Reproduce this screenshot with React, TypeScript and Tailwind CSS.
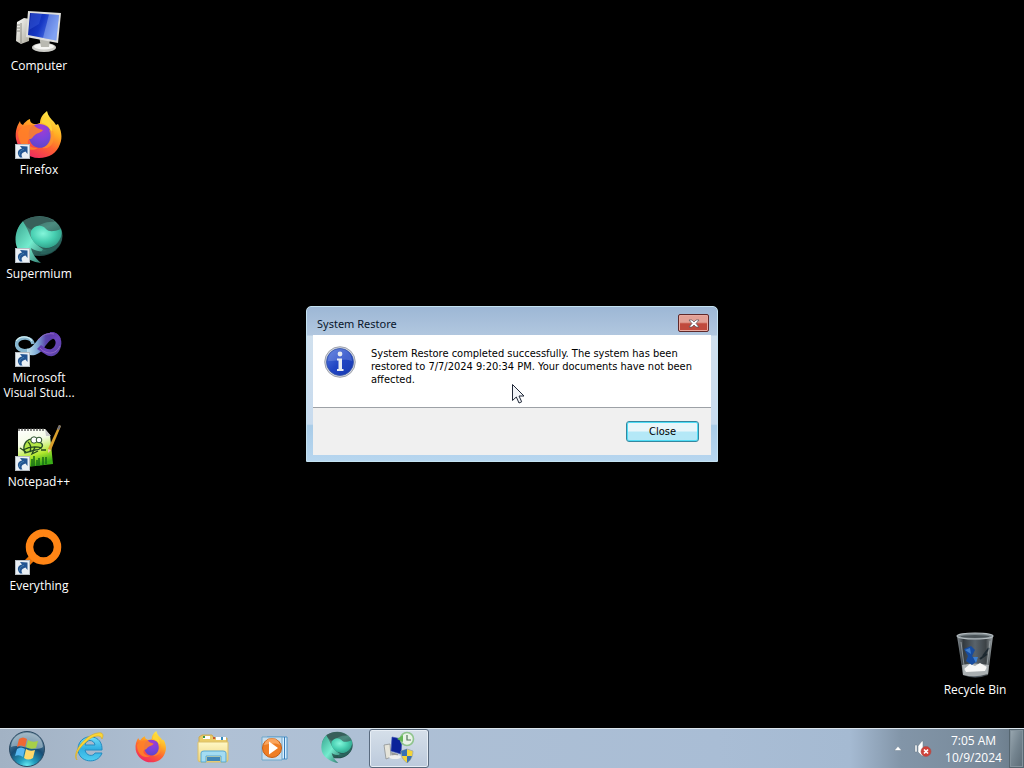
import type { ReactNode } from "react";

function ComputerIcon() {
  return (
    <svg viewBox="0 0 48 48" className="size-12" aria-hidden="true">
      <defs>
        <linearGradient id="pcScreen" x1="0" y1="0" x2="1" y2="0.4">
          <stop offset="0" stopColor="#0a1f9c" />
          <stop offset="0.5" stopColor="#1537c4" />
          <stop offset="1" stopColor="#5f86ee" />
        </linearGradient>
        <linearGradient id="pcCase" x1="0" y1="0" x2="1" y2="1">
          <stop offset="0" stopColor="#ffffff" />
          <stop offset="1" stopColor="#a9a798" />
        </linearGradient>
      </defs>
      <path d="M2 15 L9 11 L15 12 L14 34 L6 37 L1 34Z" fill="url(#pcCase)" />
      <path d="M6 16 L6 36 M2 18 L5 18 M2 21 L5 21 M2 24 L5 24" stroke="#77766c" strokeWidth="0.8" />
      <ellipse cx="29" cy="40.5" rx="12" ry="4.5" fill="#cdcdc8" />
      <ellipse cx="29" cy="39.5" rx="10" ry="3" fill="#f5f5f2" />
      <path d="M24 29 L35 32 L34 40 L26 40Z" fill="#b9b9b1" />
      <path d="M13 4 L46 6 L43 36 L11 30Z" fill="#dededb" />
      <path d="M15 6 L44 8 L41.3 33.5 L13 28Z" fill="url(#pcScreen)" />
      <path d="M34 7.3 L44 8 L41.3 33.5 L28 31Z" fill="#b5cdfa" opacity="0.4" />
      <path d="M16 6.2 L27 7 L24 17 L14 23Z" fill="#3358d8" opacity="0.5" />
    </svg>
  );
}

function FirefoxIcon({ id, className }: { id: string; className: string }) {
  return (
    <svg viewBox="0 0 48 48" className={className} aria-hidden="true">
      <defs>
        <linearGradient id={`${id}Flame`} x1="0.75" y1="0" x2="0.25" y2="1">
          <stop offset="0" stopColor="#fff04a" />
          <stop offset="0.35" stopColor="#ffad24" />
          <stop offset="0.62" stopColor="#ff6331" />
          <stop offset="1" stopColor="#ee2266" />
        </linearGradient>
        <radialGradient id={`${id}Globe`} cx="0.55" cy="0.2" r="0.9">
          <stop offset="0" stopColor="#a53ad3" />
          <stop offset="0.5" stopColor="#7844dc" />
          <stop offset="1" stopColor="#5b45c4" />
        </radialGradient>
      </defs>
      <path
        d="M5 10 C5 12 6 13 8 14 C9 12 12 9 15 8 C15 11 16 12 19 13 C21 13 23 13 25 12 C25 7 28 3 32 0 C33 5 36 8 39 11 L41 14 L43 13 C46 19 48 26 45 33 C42 42 34 47 24 47 C13 47 3 39 1 28 C0 20 2 15 5 10Z"
        fill={`url(#${id}Flame)`}
      />
      <path d="M16 16 C20 12 28 12 33 16 C38 21 37 31 31 35 C25 39 17 36 15 30 C13 25 13 20 16 16Z" fill={`url(#${id}Globe)`} />
      <path d="M3 21 C7 15 13 13 19 14 C21 17 24 18 28 19 C26 22 22 22 20 24 C17 26 18 28 14 28 C10 32 16 38 23 37 C15 42 3 37 3 21Z" fill="#ff8128" opacity="0.9" />
      <path d="M27 12 C32 13 35 17 37 22 C38 15 34 9 31 4 C28 7 26 9 27 12Z" fill="#ffd739" opacity="0.9" />
      <path d="M34 19 C37 26 35 34 27 37 C36 39 41 30 38 20Z" fill="#ff9830" opacity="0.6" />
    </svg>
  );
}

function SupermiumIcon({ id, className }: { id: string; className: string }) {
  return (
    <svg viewBox="0 0 48 48" className={className} aria-hidden="true">
      <defs>
        <linearGradient id={`${id}Left`} x1="0" y1="0" x2="1" y2="1">
          <stop offset="0" stopColor="#38a38e" />
          <stop offset="0.5" stopColor="#74ecce" />
          <stop offset="1" stopColor="#23645c" />
        </linearGradient>
        <linearGradient id={`${id}Lens`} x1="0" y1="0" x2="0.6" y2="1">
          <stop offset="0" stopColor="#345f59" />
          <stop offset="0.5" stopColor="#4c8c80" />
          <stop offset="1" stopColor="#1f4a46" />
        </linearGradient>
        <radialGradient id={`${id}Core`} cx="0.4" cy="0.35" r="0.75">
          <stop offset="0" stopColor="#84f5da" />
          <stop offset="0.5" stopColor="#47cfb1" />
          <stop offset="1" stopColor="#2b9580" />
        </radialGradient>
      </defs>
      <ellipse cx="24.5" cy="21" rx="23" ry="20" fill={`url(#${id}Lens)`} />
      <path d="M8 6 C0 14 -2 28 4 36 C8 42 17 47 26 48 C20 43 17 38 16 33 C20 36 26 37 32 36 C23 32 17 26 14 18 C12 13 10 10 8 6Z" fill={`url(#${id}Left)`} />
      <path d="M8 6 C18 0 32 0 40 7 C32 6 24 9 18 15 C13 14 10 10 8 6Z" fill="#385f5a" />
      <path d="M16 16 C19 10 27 9 31 14 C34 17 38 17 46 14 C49 25 41 33 31 33 C21 32 14 24 16 16Z" fill={`url(#${id}Core)`} />
      <path d="M25 39 C37 41 48 31 47 19 C44 29 37 35 28 34Z" fill="#2b665f" opacity="0.8" />
    </svg>
  );
}

function VisualStudioIcon() {
  return (
    <svg viewBox="0 -4 48 48" className="size-12" aria-hidden="true">
      <defs>
        <linearGradient id="vsBand" x1="0" y1="0" x2="1" y2="0">
          <stop offset="0" stopColor="#c0e2ef" />
          <stop offset="0.3" stopColor="#7eabd4" />
          <stop offset="0.55" stopColor="#5a46ad" />
          <stop offset="1" stopColor="#4d2995" />
        </linearGradient>
        <linearGradient id="vsLoop" x1="0" y1="0" x2="1" y2="1">
          <stop offset="0" stopColor="#4b2591" />
          <stop offset="0.55" stopColor="#6b45bd" />
          <stop offset="1" stopColor="#54439f" />
        </linearGradient>
      </defs>
      <path d="M18 21 C17 14 6 13 2 19 C0 26 7 29 14 27" fill="none" stroke="#86b6cf" strokeWidth="3.5" />
      <path d="M1 18 C5 12 14 13 17 18" fill="none" stroke="#d2f0f4" strokeWidth="1.3" />
      <path d="M12 26 C20 25 23 11 34 10 C39 8 44 11 46 16 C38 13 34 18 29 25 C24 32 17 34 12 31Z" fill="url(#vsBand)" />
      <path d="M35 9 C43 8 48 16 46 23 C44 32 37 36 30 31 L22 26 L26 22 C30 25 35 29 39 24 C42 20 41 15 35 15Z" fill="url(#vsLoop)" />
      <path d="M23 17 C28 11 33 10 39 11 M25 25 C31 32 41 32 45 23" fill="none" stroke="#9a71ca" strokeWidth="0.8" />
    </svg>
  );
}

function NotepadIcon() {
  return (
    <svg viewBox="0 0 48 48" className="size-12" aria-hidden="true">
      <defs>
        <linearGradient id="npPage" x1="0" y1="0" x2="0.3" y2="1">
          <stop offset="0" stopColor="#ffffff" />
          <stop offset="0.4" stopColor="#f5fce7" />
          <stop offset="0.75" stopColor="#b4e92f" />
          <stop offset="1" stopColor="#3bae17" />
        </linearGradient>
      </defs>
      <path d="M3 6 L30 6 L35 12 L38 41 L3 45Z" fill="url(#npPage)" />
      <path d="M4 5V8 M7 5V8 M10 5V8 M13 5V8 M16 5V8 M19 5V8 M22 5V8 M25 5V8 M28 5V8" stroke="#3b3b3b" strokeWidth="1.2" />
      <path d="M30 6 L31 13 L36 13Z" fill="#c9c9c9" />
      <path d="M9 27 C8 20 13 15 19 16 L26 20 C30 23 25 27 20 27 L10 30Z" fill="#b4e747" stroke="#29502a" strokeWidth="1.4" />
      <circle cx="19" cy="17" r="3.2" fill="#fff" stroke="#29502a" />
      <circle cx="24" cy="17" r="2.8" fill="#fff" stroke="#29502a" />
      <path d="M8 27 Q17 22 27 25 M13 19 Q17 22 15 29 M5 25 L11 29 M20 24 L17 31 L23 28 M26 27H31" fill="none" stroke="#24491c" strokeWidth="1.3" />
      <path d="M17 36V43 M19 33V43 M22 37V43 M24 35V43 M28 34V42 M31 34V41" stroke="#176c16" strokeWidth="1.5" />
      <path d="M44 2 L46 3 L36 27 L33 30 L33 26Z" fill="#d99f2c" />
      <path d="M44 2 L46 3 L44 7 L42 6Z" fill="#70717c" />
      <path d="M33 26 L36 27 L33 30Z" fill="#e8d0a0" />
    </svg>
  );
}

function EverythingIcon() {
  return (
    <svg viewBox="0 0 48 48" className="size-12" aria-hidden="true">
      <path d="M17 31 L6 42" stroke="#e8740a" strokeWidth="7" />
      <circle cx="28.5" cy="20" r="14" fill="none" stroke="#ff8515" strokeWidth="7.5" />
    </svg>
  );
}

function RecycleBinIcon() {
  return (
    <svg viewBox="0 0 48 48" className="size-12" aria-hidden="true">
      <defs>
        <linearGradient id="binGlass" x1="0" y1="0" x2="1" y2="0">
          <stop offset="0" stopColor="#858d92" />
          <stop offset="0.18" stopColor="#343b40" />
          <stop offset="0.5" stopColor="#59636b" />
          <stop offset="0.8" stopColor="#3c4246" />
          <stop offset="1" stopColor="#a0a7aa" />
        </linearGradient>
      </defs>
      <path d="M6 5 L42 5 L37 44 Q24 49 12 44Z" fill="url(#binGlass)" />
      <path d="M11 34 Q22 31 38 34 L37 43 Q24 47 12 44Z" fill="#a9aeb0" />
      <path d="M13 38 L19 33 L24 35 L29 32 L36 36 L34 40 L15 41Z" fill="#f7f7f6" />
      <path d="M13 18 L20 15 L24 19 L21 25 L26 30 L21 34 L15 30 L17 25Z" fill="#174ca0" />
      <path d="M14 19 L19 17 L20 23Z M22 26 L27 26 L25 32Z" fill="#3c7fd0" />
      <path d="M32 25 L38 17 M29 28 L36 23" stroke="#1c2830" strokeWidth="2" />
      <ellipse cx="24" cy="5" rx="18" ry="3" fill="#7f898e" stroke="#b4bcc0" strokeWidth="1.2" />
      <ellipse cx="24" cy="5.5" rx="14.5" ry="1.5" fill="#4a5358" />
      <path d="M10 11 L14 42 M39 10 L35 42" stroke="#bbc4c7" strokeWidth="1" opacity="0.6" />
    </svg>
  );
}

function ShortcutArrow() {
  return (
    <svg viewBox="0 0 15 15" className="absolute bottom-0 left-0 size-[15px]" aria-hidden="true">
      <rect x="0.5" y="0.5" width="14" height="14" fill="#eaf0f5" stroke="#b4bbc1" />
      <path d="M5 13.5 C1.5 9.5 2.5 5.5 7 4.5 L5 2 L12.5 2.5 L12.5 10 L10.5 7.5 C7 8.5 5.5 10.5 7.5 13.5Z" fill="#225491" />
      <path d="M4.5 11 C4 8 6 6 9 5.5" fill="none" stroke="#437eaf" strokeWidth="1" />
    </svg>
  );
}

function DesktopIcon({ label, shortcut = false, children }: { label: string; shortcut?: boolean; children: ReactNode }) {
  return (
    <li className="h-[104px]">
      <button className="flex w-full flex-col items-center gap-[3px] text-xs/[15px] text-white [text-shadow:0_1px_2px_#000]">
        <span className="relative block">
          {children}
          {shortcut && <ShortcutArrow />}
        </span>
        <span className="w-[72px] whitespace-pre-line text-center">{label}</span>
      </button>
    </li>
  );
}

function StartOrb() {
  return (
    <svg viewBox="0 0 38 38" className="size-[38px]" aria-hidden="true">
      <defs>
        <radialGradient id="orb" cx="0.5" cy="1" r="0.95">
          <stop offset="0" stopColor="#6ff2f7" />
          <stop offset="0.25" stopColor="#249fc0" />
          <stop offset="0.6" stopColor="#174d75" />
          <stop offset="1" stopColor="#6f8ea3" />
        </radialGradient>
      </defs>
      <circle cx="19" cy="19" r="17.5" fill="url(#orb)" stroke="#2b4a63" />
      <path d="M3 17 C4 -2 34 -2 35 17 C26 23 12 13 3 17Z" fill="#dfeaf0" opacity="0.45" />
      <path d="M11 9 Q15 6 19 9 L17 17 Q13 14 9 17Z" fill="#ef6834" />
      <path d="M20 10 Q24 13 30 11 L28 18 Q22 20 18 17Z" fill="#a7cf49" />
      <path d="M9 19 Q13 16 17 19 L15 27 Q11 24 7 26Z" fill="#58b8f1" />
      <path d="M18 19 Q22 22 27 20 L25 28 Q20 31 16 28Z" fill="#ffd96a" />
    </svg>
  );
}

function ExplorerBrowserIcon() {
  return (
    <svg viewBox="0 0 32 32" className="size-8" aria-hidden="true">
      <defs>
        <linearGradient id="ie" x1="0" y1="0" x2="0" y2="1">
          <stop offset="0" stopColor="#73dff8" />
          <stop offset="0.5" stopColor="#31afe2" />
          <stop offset="1" stopColor="#51cef1" />
        </linearGradient>
      </defs>
      <path d="M29 19 H12 C13 25 20 26 22 22 H29 C25 34 5 32 5 18 C5 2 30 1 29 19Z M12 14 H22 C21 8 13 8 12 14Z" fill="url(#ie)" stroke="#248bc1" strokeWidth="1" fillRule="evenodd" />
      <path d="M4 29 C-2 22 13 3 25 2 C30 1 31 4 29 8 C28 3 20 4 13 11 C6 17 1 25 4 29Z" fill="#fbd637" stroke="#d8ad25" strokeWidth="0.7" />
    </svg>
  );
}

function FolderIcon() {
  return (
    <svg viewBox="0 -2 36 32" className="h-8 w-9" aria-hidden="true">
      <defs>
        <linearGradient id="folder" x1="0" y1="0" x2="0" y2="1">
          <stop offset="0" stopColor="#fff8c6" />
          <stop offset="1" stopColor="#edd27a" />
        </linearGradient>
      </defs>
      <path d="M4 4 L7 2 H17 L19 5 H32 V24 H4Z" fill="#eacb67" stroke="#c9aa55" />
      <path d="M8 3H15V6H8Z M21 4H31V7H21Z" fill="#fff" />
      <path d="M9 3V5" stroke="#3e973d" strokeWidth="2" />
      <path d="M18 5H20" stroke="#cc5730" strokeWidth="2" />
      <path d="M27 4V7" stroke="#318bbd" strokeWidth="2" />
      <path d="M3 9 H33 V27 Q33 29 30 29 H6 Q3 29 3 27Z" fill="url(#folder)" stroke="#dcc06b" />
      <path d="M6 29 V20 Q6 18 9 18 H28 Q31 18 31 20 V29 H26 V23 H11 V29Z" fill="#a3dcf2" stroke="#5ba9d2" />
      <path d="M12 24H25V28H12Z" fill="#4186b8" />
    </svg>
  );
}

function MediaPlayerIcon() {
  return (
    <svg viewBox="0 -1 32 32" className="size-8" aria-hidden="true">
      <path d="M8 5H28V27H8Z" fill="#d9efff" stroke="#4b93c8" />
      <path d="M25.5 5V27" stroke="#377ab5" strokeWidth="1" />
      <path d="M3 5H23V28H3Z" fill="#c8ddec" stroke="#6ea7cb" />
      <circle cx="13" cy="16" r="9.5" fill="#ee7d24" stroke="#c45e16" />
      <path d="M5 13 C7 4 19 4 21 13 C16 10 10 12 5 13Z" fill="#ffb575" opacity="0.7" />
      <path d="M10 9.5 L19 16 L10 22.5Z" fill="#fff" />
    </svg>
  );
}

function RestoreTaskIcon() {
  return (
    <svg viewBox="0 0 32 32" className="size-8" aria-hidden="true">
      <path d="M1 14 L7 13 L8 26 L3 28Z" fill="#e5e4da" stroke="#8e9293" strokeWidth="0.8" />
      <path d="M9 6 L19 8 L18 23 L8 20Z" fill="#0b2299" stroke="#3d53b4" strokeWidth="0.6" />
      <path d="M8 21L15 23V25H9Z" fill="#999" />
      <ellipse cx="12" cy="26" rx="6" ry="2" fill="#eee" />
      <circle cx="24" cy="8" r="6.5" fill="#e8f3e6" stroke="#8fc48d" strokeWidth="1.6" />
      <path d="M24 4V9H28" fill="none" stroke="#54765a" strokeWidth="1.2" />
      <path d="M14 8L20 4L20 11Z" fill="#64b756" />
      <path d="M18 20 L24 18 L30 20 C30 26 27 30 24 32 C20 29 18 26 18 20Z" fill="#f4d439" stroke="#9aa7ad" strokeWidth="0.8" />
      <path d="M18 20L24 18V25H19Z M24 25H29Q28 29 24 32Z" fill="#3870b4" />
    </svg>
  );
}

function MutedSpeakerIcon() {
  return (
    <svg viewBox="0 0 20 18" className="h-[18px] w-5" aria-hidden="true">
      <path d="M1 5H3V12H1Z M4 6L8 1H9V16H8L4 12Z" fill="#fff" stroke="#6b7a86" strokeWidth="0.5" />
      <circle cx="12" cy="11.5" r="5" fill="#cf4038" stroke="#a8524f" strokeWidth="0.6" />
      <path d="M10 9.5L14 13.5M14 9.5L10 13.5" stroke="#fff" strokeWidth="1.7" />
    </svg>
  );
}

function InfoIcon() {
  return (
    <svg viewBox="0 0 32 32" className="size-8 shrink-0" aria-hidden="true">
      <defs>
        <linearGradient id="info" x1="0" y1="0" x2="1" y2="1">
          <stop offset="0" stopColor="#5578dc" />
          <stop offset="0.5" stopColor="#2145c4" />
          <stop offset="1" stopColor="#1638ae" />
        </linearGradient>
      </defs>
      <circle cx="16" cy="16" r="15.3" fill="#d3d8e0" stroke="#8d919e" strokeWidth="0.8" />
      <circle cx="16" cy="16" r="13.5" fill="url(#info)" stroke="#3754a7" strokeWidth="0.8" />
      <path d="M4 15C4 -1 28 -1 28 15C21 12 12 15 4 15Z" fill="#9ab0eb" opacity="0.3" />
      <circle cx="16" cy="8" r="2.4" fill="#e9ecf2" />
      <path d="M13 12.5H18V23H19.5V25H13V23H14.5V14.5H13Z" fill="#e9ecf2" />
    </svg>
  );
}

function Cursor() {
  return (
    <svg viewBox="0 0 13 20" className="absolute left-1/2 top-1/2 h-5 w-[13px]" aria-hidden="true">
      <path d="M0.5 0.5 V16.5 L4.3 13 L7 19 L9.7 17.8 L7 12 H12Z" fill="#f1f3f7" stroke="#202838" strokeWidth="1" />
    </svg>
  );
}

function RestoreDialog() {
  return (
    <section
      role="dialog"
      aria-labelledby="dialog-title"
      className="relative w-[412px] rounded-t-[5px] border border-[#c5e3f2] bg-[linear-gradient(to_bottom,#9db7d5_0,#b1c7df_28px,#d0e0ee_29px,#c8dbee_76%,#a9cce8_77%,#b7d6ef_100%)] px-1.5 pb-1.5 text-[11px]/[13px] text-black"
    >
      <header className="flex h-7 items-center justify-between pl-1 pr-0.5 pt-1">
        <h1 id="dialog-title" className="font-['Noto_Sans',sans-serif] text-[11px]/[15px] font-normal text-[#08162c]">
          System Restore
        </h1>
        <button
          aria-label="Close window"
          className="grid h-[18px] w-[31px] place-items-center rounded-[2px] border border-[#5f292a] bg-linear-to-b from-[#e2a095] from-45% to-[#c04a3d] to-55% shadow-[inset_0_0_0_1px_#e9aaa0]"
        >
          <svg viewBox="0 0 12 9" className="h-[9px] w-3" aria-hidden="true">
            <path d="M1 1H4L6 3L8 1H11L8 4.5L11 8H8L6 6L4 8H1L4 4.5Z" fill="#fff" stroke="#56535a" strokeWidth="0.7" />
          </svg>
        </button>
      </header>
      <div className="flex h-[73px] gap-[15px] border-b border-[#9da1a6] bg-white pl-[11px] pt-[11px]">
        <InfoIcon />
        <p className="w-[330px] pt-px font-['DejaVu_Sans_Condensed','DejaVu_Sans',sans-serif]">
          System Restore completed successfully. The system has been
          <br />
          restored to 7/7/2024 9:20:34 PM. Your documents have not been
          <br />
          affected.
        </p>
      </div>
      <footer className="flex h-[47px] justify-end bg-[#f0f0f0] pr-3 pt-[13px]">
        <button className="h-[21px] w-[73px] rounded-[3px] border border-[#35879f] bg-linear-to-b from-[#e9f6fa] from-45% to-[#b4e8f7] to-55% font-['DejaVu_Sans_Condensed','DejaVu_Sans',sans-serif] shadow-[inset_0_0_0_1px_#4fdcf5]">
          Close
        </button>
      </footer>
      <Cursor />
    </section>
  );
}

function TaskButton({ label, active = false, children }: { label: string; active?: boolean; children: ReactNode }) {
  return (
    <button
      aria-label={label}
      className={
        active
          ? "grid h-[39px] w-[60px] justify-items-center rounded-[3px] border border-[#596a7e] bg-linear-to-b from-[#d5dfe9] to-[#bccadc] pt-px shadow-[inset_0_0_0_1px_#e7eef5]"
          : "grid h-[39px] w-[60px] justify-items-center pt-0.5"
      }
    >
      {children}
    </button>
  );
}

export default function App() {
  return (
    <div className="relative flex min-h-screen flex-col bg-black font-['Open_Sans','Noto_Sans',sans-serif]">
      <main className="flex flex-1 items-end justify-between">
        <ul className="w-[78px] self-start pt-[7px]">
          <DesktopIcon label="Computer"><ComputerIcon /></DesktopIcon>
          <DesktopIcon label="Firefox" shortcut><FirefoxIcon id="desktopFox" className="size-12" /></DesktopIcon>
          <DesktopIcon label="Supermium" shortcut><SupermiumIcon id="desktopSm" className="size-12" /></DesktopIcon>
          <DesktopIcon label={"Microsoft\nVisual Stud..."} shortcut><VisualStudioIcon /></DesktopIcon>
          <DesktopIcon label="Notepad++" shortcut><NotepadIcon /></DesktopIcon>
          <DesktopIcon label="Everything" shortcut><EverythingIcon /></DesktopIcon>
        </ul>
        <ul className="h-[97px] w-[98px]">
          <DesktopIcon label="Recycle Bin"><RecycleBinIcon /></DesktopIcon>
        </ul>
      </main>

      <div className="absolute inset-0 grid place-items-center">
        <RestoreDialog />
      </div>

      <footer className="relative flex h-10 items-center border-t border-[#dbe5ed] bg-[linear-gradient(to_right,#a2b2c4_0,#b0c1d5_20%,#a9bdd5_70%,#a5bad2_83%,#8295a8_88%,#778999_97%,#667785_100%)]">
        <button aria-label="Start" className="grid w-[59px] pl-2">
          <StartOrb />
        </button>
        <nav aria-label="Taskbar" className="flex flex-1 gap-0.5">
          <TaskButton label="Internet Explorer"><ExplorerBrowserIcon /></TaskButton>
          <TaskButton label="Firefox"><FirefoxIcon id="taskFox" className="size-8" /></TaskButton>
          <TaskButton label="File Explorer"><FolderIcon /></TaskButton>
          <TaskButton label="Media Player"><MediaPlayerIcon /></TaskButton>
          <TaskButton label="Supermium"><SupermiumIcon id="taskSm" className="size-8" /></TaskButton>
          <TaskButton label="System Restore" active><RestoreTaskIcon /></TaskButton>
        </nav>
        <div className="flex items-center gap-3">
          <button aria-label="Show hidden icons">
            <svg viewBox="0 0 8 5" className="h-[5px] w-2" aria-hidden="true">
              <path d="M0.2 4.6L4 0.3L7.8 4.6Z" fill="#fff" stroke="#56697b" strokeWidth="0.4" />
            </svg>
          </button>
          <button aria-label="Volume muted"><MutedSpeakerIcon /></button>
        </div>
        <div className="w-[75px] pl-1 text-center text-xs/[17px] text-white">
          <div>7:05 AM</div>
          <div>10/9/2024</div>
        </div>
        <button aria-label="Show desktop" className="h-[39px] w-[15px] border border-[#55656f] bg-linear-to-br from-[#9aa8b1] via-[#74848f] to-[#5b6a75] shadow-[inset_0_0_0_1px_#83929c]" />
      </footer>
    </div>
  );
}
